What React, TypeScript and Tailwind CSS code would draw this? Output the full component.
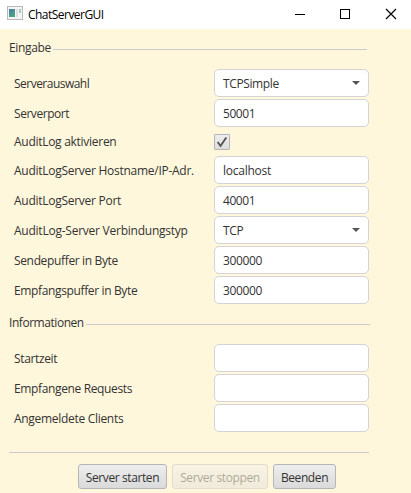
import type { ReactNode } from 'react';

type FieldProps = { label: string; value?: string; select?: boolean; tracking?: string; valueTracking?: string };

function Field({ label, value = '', select = false, tracking = '', valueTracking = '' }: FieldProps) {
  return (
    <div className="flex h-[28px] items-center">
      <span className={`w-[200px] shrink-0 pt-[2px] whitespace-nowrap ${tracking}`}>{label}</span>
      <div className="flex h-[28px] w-[155px] items-center justify-between rounded-[5px] border border-[#d3d3d8] bg-white pr-[8px] pl-[8px]">
        <span className={`pt-[2px] ${valueTracking}`}>{value}</span>
        {select && (
          <svg width="8" height="4" viewBox="0 0 8 4" fill="#555">
            <path d="M0 0H8L4 4Z" />
          </svg>
        )}
      </div>
    </div>
  );
}

function Heading({ children, end }: { children: ReactNode; end: string }) {
  return (
    <div className={`ml-[9px] flex h-[20px] items-center gap-[2px] ${end}`}>
      {children}
      <div className="mt-[2px] h-px flex-1 bg-[#cacace]" />
    </div>
  );
}

function Button({ children, size, disabled = false }: { children: ReactNode; size: string; disabled?: boolean }) {
  return (
    <button
      disabled={disabled}
      className={`flex h-[25px] items-center justify-center rounded-[3px] border border-[#b5b5b8] bg-linear-to-b from-[#eeeeee] to-[#dadada] pt-[2px] whitespace-nowrap disabled:opacity-40 ${size}`}
    >
      {children}
    </button>
  );
}

export default function App() {
  return (
    <div className="flex h-[493px] w-[411px] flex-col overflow-hidden bg-[#fff7dc] font-['Open_Sans','Noto_Sans',sans-serif] text-[12px] leading-[16px] tracking-[-0.3px] text-[#333]">
      <header className="flex h-[29px] shrink-0 items-center bg-white pl-[7px] text-black">
        <svg width="16" height="14" viewBox="0 0 16 14" className="mt-[-3px] shrink-0">
          <defs>
            <linearGradient id="pane" x1="0" y1="0" x2="0.5" y2="1">
              <stop offset="0" stopColor="#4a78a4" />
              <stop offset="1" stopColor="#48a884" />
            </linearGradient>
          </defs>
          <rect x="0.5" y="0.5" width="15" height="13" fill="#f5f5f5" stroke="#b8b8b8" />
          <rect x="2" y="3" width="6" height="8" fill="url(#pane)" />
          <rect x="9" y="3" width="2" height="8" fill="#dce0e0" />
          <rect x="12" y="3" width="2" height="4" fill="#a8cdb4" />
        </svg>
        <span className="ml-[5px] flex-1 tracking-[-0.53px]">ChatServerGUI</span>
        <svg width="103" height="12" viewBox="0 0 103 12" className="mt-[-2px] mr-[13px]" fill="none" stroke="#000" shapeRendering="crispEdges">
          <path d="M0 6.5H10M45.5 1.5H54.5V10.5H45.5Z" />
          <path d="M91 1L101 11M101 1L91 11" shapeRendering="auto" strokeWidth="1.2" />
        </svg>
      </header>
      <main className="flex flex-1 flex-col">
        <div className="h-[9px]" />
        <Heading end="mr-[44px]">
          <span className="tracking-[-0.35px]">Eingabe</span>
        </Heading>
        <section className="mt-[11px] ml-[14px] flex flex-col gap-[2px]">
          <Field label="Serverauswahl" tracking="tracking-[-0.52px]" value="TCPSimple" valueTracking="tracking-[-0.38px]" select />
          <Field label="Serverport" tracking="tracking-[-0.45px]" value="50001" valueTracking="tracking-[-0.45px]" />
          <div className="flex h-[25px] items-center">
            <span className="w-[200px] pt-[1px] tracking-[-0.28px]">AuditLog aktivieren</span>
            <div className="flex size-[16px] items-center justify-center rounded-[1px] border border-[#b5b5b8] bg-linear-to-b from-[#eeeeee] to-[#dddddd]">
              <svg width="12" height="12" viewBox="0 0 12 12" fill="none" stroke="#505050" strokeWidth="1.8">
                <path d="M1.7 6L4.5 10L10.3 1.5" />
              </svg>
            </div>
          </div>
          <Field label="AuditLogServer Hostname/IP-Adr." tracking="tracking-[-0.27px]" value="localhost" valueTracking="tracking-[-0.25px]" />
          <Field label="AuditLogServer Port" tracking="tracking-[-0.27px]" value="40001" valueTracking="tracking-[-0.45px]" />
          <Field label="AuditLog-Server Verbindungstyp" tracking="tracking-[-0.24px]" value="TCP" valueTracking="tracking-[-0.3px]" select />
          <Field label="Sendepuffer in Byte" tracking="tracking-[-0.35px]" value="300000" valueTracking="tracking-[-0.38px]" />
          <Field label="Empfangspuffer in Byte" tracking="tracking-[-0.36px]" value="300000" valueTracking="tracking-[-0.38px]" />
        </section>
        <div className="h-[9px]" />
        <Heading end="mr-[41px]">
          <span className="tracking-[-0.45px]">Informationen</span>
        </Heading>
        <section className="mt-[11px] ml-[14px] flex flex-col gap-[2px]">
          <Field label="Startzeit" tracking="tracking-[-0.35px]" />
          <Field label="Empfangene Requests" tracking="tracking-[-0.36px]" />
          <Field label="Angemeldete Clients" tracking="tracking-[-0.3px]" />
        </section>
        <div className="mt-[20px] ml-[9px] h-px w-[360px] bg-[#cacace]" />
        <footer className="mt-[11px] ml-[78px] flex gap-[5px]">
          <Button size="w-[89px] tracking-[-0.4px]">Server starten</Button>
          <Button size="w-[96px] tracking-[-0.38px]" disabled>Server stoppen</Button>
          <Button size="w-[63px] tracking-[-0.4px]">Beenden</Button>
        </footer>
      </main>
    </div>
  );
}
